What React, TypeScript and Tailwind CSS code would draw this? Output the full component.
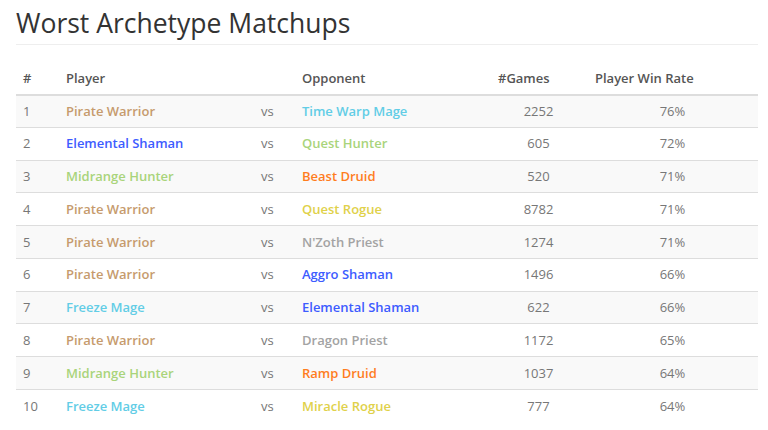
const CLASS_COLORS: Record<string, string> = {
  warrior: "text-[#c69b6d]",
  shaman: "text-[#3d5cff]",
  hunter: "text-[#a9d47b]",
  mage: "text-[#62cde6]",
  druid: "text-[#ff7d1e]",
  rogue: "text-[#e0d14a]",
  priest: "text-[#a3a3a3]",
};

type Deck = { name: string; cls: keyof typeof CLASS_COLORS };

const rows: { player: Deck; opponent: Deck; games: number; rate: string }[] = [
  { player: { name: "Pirate Warrior", cls: "warrior" }, opponent: { name: "Time Warp Mage", cls: "mage" }, games: 2252, rate: "76%" },
  { player: { name: "Elemental Shaman", cls: "shaman" }, opponent: { name: "Quest Hunter", cls: "hunter" }, games: 605, rate: "72%" },
  { player: { name: "Midrange Hunter", cls: "hunter" }, opponent: { name: "Beast Druid", cls: "druid" }, games: 520, rate: "71%" },
  { player: { name: "Pirate Warrior", cls: "warrior" }, opponent: { name: "Quest Rogue", cls: "rogue" }, games: 8782, rate: "71%" },
  { player: { name: "Pirate Warrior", cls: "warrior" }, opponent: { name: "N'Zoth Priest", cls: "priest" }, games: 1274, rate: "71%" },
  { player: { name: "Pirate Warrior", cls: "warrior" }, opponent: { name: "Aggro Shaman", cls: "shaman" }, games: 1496, rate: "66%" },
  { player: { name: "Freeze Mage", cls: "mage" }, opponent: { name: "Elemental Shaman", cls: "shaman" }, games: 622, rate: "66%" },
  { player: { name: "Pirate Warrior", cls: "warrior" }, opponent: { name: "Dragon Priest", cls: "priest" }, games: 1172, rate: "65%" },
  { player: { name: "Midrange Hunter", cls: "hunter" }, opponent: { name: "Ramp Druid", cls: "druid" }, games: 1037, rate: "64%" },
  { player: { name: "Freeze Mage", cls: "mage" }, opponent: { name: "Miracle Rogue", cls: "rogue" }, games: 777, rate: "64%" },
];

export default function App() {
  return (
    <div className="w-[768px] h-[430px] overflow-hidden bg-white pl-[16px] pr-[10px] pt-[5px] font-['Open_Sans',sans-serif] text-[13px] text-[#777]">
      <h1 className="border-b border-[#eee] pb-[3px] text-[26.5px] leading-[36px] font-normal text-[#333]">
        Worst Archetype Matchups
      </h1>
      <table className="mt-[24px] w-[742px] table-fixed border-collapse">
        <colgroup>
          <col className="w-[42px]" />
          <col className="w-[195px]" />
          <col className="w-[41px]" />
          <col className="w-[196px]" />
          <col className="w-[97px]" />
          <col className="w-[171px]" />
        </colgroup>
        <thead>
          <tr className="border-b-2 border-[#ddd] text-left text-[#555]">
            <th className="px-[7px] pb-[5px] font-semibold">#</th>
            <th className="px-[8px] pb-[5px] font-semibold">Player</th>
            <th className="px-[8px] pb-[5px]"></th>
            <th className="px-[8px] pb-[5px] font-semibold">Opponent</th>
            <th className="px-[8px] pb-[5px] font-semibold">#Games</th>
            <th className="px-[8px] pb-[5px] font-semibold">Player Win Rate</th>
          </tr>
        </thead>
        <tbody>
          {rows.map((r, i) => (
            <tr
              key={i}
              className={`h-[32.78px] border-b border-[#ddd] last:border-b-0 ${i % 2 === 0 ? "bg-[#f9f9f9]" : "bg-white"}`}
            >
              <td className="px-[7px] pt-[1px]">{i + 1}</td>
              <td className={`px-[8px] pt-[1px] font-semibold ${CLASS_COLORS[r.player.cls]}`}>{r.player.name}</td>
              <td className="px-[8px] pt-[1px]">vs</td>
              <td className={`px-[8px] pt-[1px] font-semibold ${CLASS_COLORS[r.opponent.cls]}`}>{r.opponent.name}</td>
              <td className="px-[8px] pt-[1px] text-center">{r.games}</td>
              <td className="px-[8px] pt-[1px] text-center">{r.rate}</td>
            </tr>
          ))}
        </tbody>
      </table>
    </div>
  );
}
